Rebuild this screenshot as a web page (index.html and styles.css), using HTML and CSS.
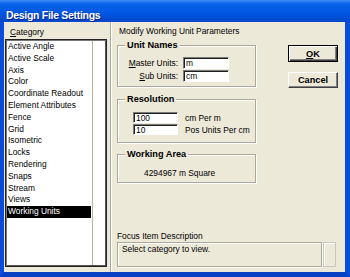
FILE: index.html
```html
<!DOCTYPE html>
<html lang="en">
<head>
    <meta charset="UTF-8">
    <title>Design File Settings</title>
    <link rel="stylesheet" href="styles.css">
</head>
<body>
    <div class="window">
        <div class="titlebar">Design File Settings</div>
        <div class="frame">
            <div class="category-pane">
                <div class="pane-label"><u>C</u>ategory</div>
                <div class="listbox">
                    <ul class="list-items">
                        <li>Active Angle</li>
                        <li>Active Scale</li>
                        <li>Axis</li>
                        <li>Color</li>
                        <li>Coordinate Readout</li>
                        <li>Element Attributes</li>
                        <li>Fence</li>
                        <li>Grid</li>
                        <li>Isometric</li>
                        <li>Locks</li>
                        <li>Rendering</li>
                        <li>Snaps</li>
                        <li>Stream</li>
                        <li>Views</li>
                        <li class="selected">Working Units</li>
                    </ul>
                    <div class="list-scroll"></div>
                </div>
            </div>

            <div class="settings-pane">
                <div class="settings-top">
                    <div class="settings-main">
                        <div class="pane-title">Modify Working Unit Parameters</div>

                        <fieldset class="group group-names">
                            <legend>Unit Names</legend>
                            <div class="name-grid">
                                <label><u>M</u>aster Units:</label>
                                <input class="field" type="text" value="m" readonly>
                                <label><u>S</u>ub Units:</label>
                                <input class="field" type="text" value="cm" readonly>
                            </div>
                        </fieldset>

                        <fieldset class="group group-resolution">
                            <legend>Resolution</legend>
                            <div class="res-grid">
                                <input class="field" type="text" value="100" readonly>
                                <span>cm Per m</span>
                                <input class="field" type="text" value="10" readonly>
                                <span>Pos Units Per cm</span>
                            </div>
                        </fieldset>

                        <fieldset class="group group-area">
                            <legend>Working Area</legend>
                            <div class="area-value">4294967 m Square</div>
                        </fieldset>
                    </div>

                    <div class="dialog-buttons">
                        <button class="btn btn-default"><u>O</u>K</button>
                        <button class="btn">Cancel</button>
                    </div>
                </div>

                <div class="focus">
                    <div class="focus-label">Focus Item Description</div>
                    <div class="focus-row">
                        <div class="focus-box">Select category to view.</div>
                        <div class="focus-side"></div>
                    </div>
                </div>
            </div>
        </div>
    </div>
</body>
</html>
```

FILE: styles.css
```css
* {
    margin: 0;
    padding: 0;
    box-sizing: border-box;
}

body {
    font-family: 'Liberation Sans', Arial, sans-serif;
    font-size: 8.4px;
    color: #000;
    background-color: #ece9d8;
    width: 350px;
    height: 277px;
    overflow: hidden;
}

.window {
    width: 350px;
    height: 277px;
    display: flex;
    flex-direction: column;
}

.titlebar {
    height: 22px;
    padding: 8px 0 0 6px;
    line-height: 14px;
    font-size: 10.5px;
    font-weight: bold;
    letter-spacing: -0.3px;
    color: #fff;
    text-shadow: 1px 1px 0 #0a1f8f;
    background: linear-gradient(#3d8ef5, #0a62ea 18%, #0057e2 60%, #0047c8);
}

.frame {
    flex: 1;
    display: flex;
    background-color: #ece9d8;
    border-left: 4px solid #0a4bd9;
    border-right: 5px solid #0a4bd9;
    border-bottom: 5px solid #0841c4;
}

/* left pane */

.category-pane {
    width: 107px;
    padding: 4px 0 0 1px;
    border-right: 1px solid #aca899;
    box-shadow: 1px 0 0 #fff;
    display: flex;
    flex-direction: column;
}

.pane-label {
    line-height: 12px;
    padding-left: 5px;
    margin-bottom: 1px;
}

.listbox {
    width: 102px;
    height: 228px;
    display: flex;
    background-color: #fff;
    border: 1px solid #222;
    box-shadow: inset 1px 1px 0 #777, inset -1px -1px 0 #555;
    padding: 1px;
}

.list-items {
    list-style: none;
    width: 85px;
}

.list-items li {
    line-height: 11.8px;
    height: 11.8px;
    padding-left: 1px;
    white-space: nowrap;
}

.list-items li.selected {
    background-color: #000;
    color: #fff;
    margin-right: 1px;
}

.list-scroll {
    flex: 1;
    border-left: 1px solid #b5b2a5;
}

/* right pane */

.settings-pane {
    flex: 1;
    display: flex;
    flex-direction: column;
    padding: 3px 0 5px 6px;
}

.settings-top {
    display: flex;
    gap: 32px;
}

.settings-main {
    width: 139px;
}

.pane-title {
    line-height: 12px;
    padding-left: 2px;
    white-space: nowrap;
}

.group {
    border: 1px solid #aca899;
    box-shadow: inset 1px 1px 0 #fff, 1px 1px 0 #fff;
}

.group legend {
    font-size: 9.2px;
    font-weight: bold;
    line-height: 11px;
    margin-left: 7px;
    padding: 0 2px;
    background-color: #ece9d8;
}

.group-names {
    margin-top: 2.5px;
    padding: 6.5px 0 4px 0;
}

.group-resolution {
    margin-top: 6.5px;
    padding: 7.5px 0 7px 0;
}

.group-area {
    margin-top: 5.5px;
    padding: 7.5px 0 3px 0;
}

.name-grid {
    display: grid;
    grid-template-columns: 60px 46px;
    grid-auto-rows: 12px;
    column-gap: 5px;
    row-gap: 1px;
    align-items: center;
}

.name-grid label {
    text-align: right;
    white-space: nowrap;
}

.res-grid {
    display: grid;
    grid-template-columns: 45px auto;
    grid-auto-rows: 11px;
    column-gap: 7px;
    row-gap: 1px;
    align-items: center;
    padding-left: 15px;
    white-space: nowrap;
}

.field {
    font-family: inherit;
    font-size: 8.4px;
    height: 100%;
    width: 100%;
    padding: 0 2px;
    background-color: #fff;
    border-top: 1px solid #7a7a7a;
    border-left: 1px solid #7a7a7a;
    border-bottom: 1px solid #fff;
    border-right: 1px solid #fff;
    box-shadow: inset 1px 1px 0 #1e1e1e;
    outline: none;
}

.area-value {
    line-height: 12px;
    padding-left: 26px;
}

/* buttons */

.dialog-buttons {
    width: 50px;
    padding-top: 20px;
    display: flex;
    flex-direction: column;
    gap: 10px;
}

.btn {
    font-family: inherit;
    font-size: 9.2px;
    font-weight: bold;
    height: 16px;
    width: 50px;
    background-color: #ece9d8;
    border-top: 1px solid #fff;
    border-left: 1px solid #fff;
    border-bottom: 1px solid #404040;
    border-right: 1px solid #404040;
    box-shadow: inset -1px -1px 0 #808080;
}

.btn-default {
    height: 17px;
    border: 1px solid #000;
    box-shadow: inset 1px 1px 0 #fff, inset -1px -1px 0 #404040, inset -2px -2px 0 #808080;
}

/* focus description */

.focus {
    margin-top: auto;
}

.focus-label {
    line-height: 11px;
}

.focus-row {
    display: flex;
    gap: 1px;
}

.focus-box {
    width: 205px;
    height: 25px;
    padding: 0 4px;
    line-height: 12px;
    border: 1px solid #aca899;
    box-shadow: inset 1px 1px 0 #fff, 1px 1px 0 #fff;
}

.focus-side {
    width: 13px;
    height: 25px;
    border: 1px solid #c9c6b8;
    box-shadow: inset 1px 1px 0 #fff;
}
```
